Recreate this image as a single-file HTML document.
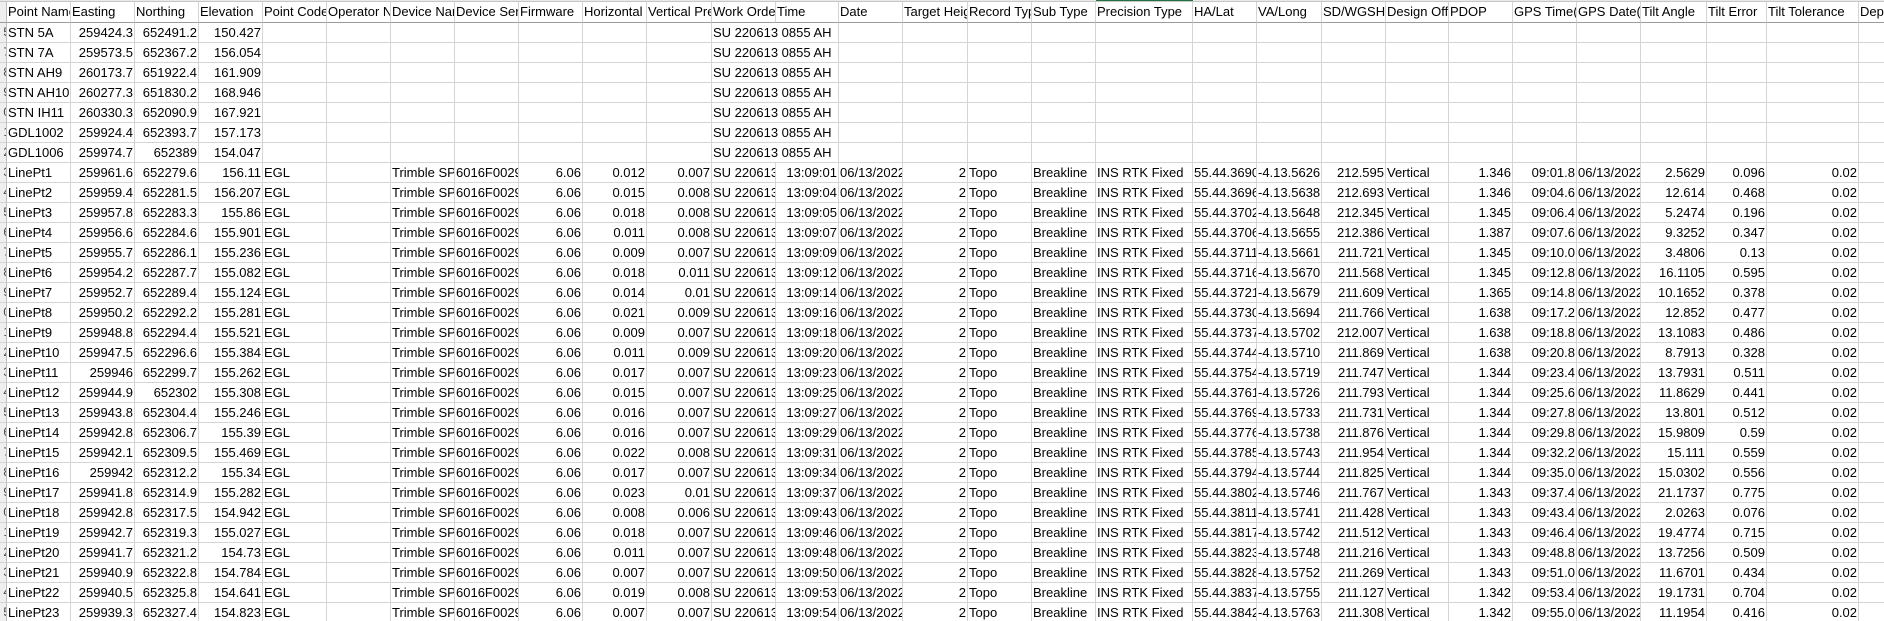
<!DOCTYPE html>
<html><head><meta charset="utf-8">
<style>
html,body{margin:0;padding:0;background:#fff;width:1884px;height:621px;overflow:hidden}
.strip{height:1px;background:#e9e9e9;border-bottom:1px solid #c6c6c6;position:relative}
.sel{position:absolute;left:1096px;top:-1px;width:97px;height:2px;background:#217346}
table{border-collapse:separate;border-spacing:0;table-layout:fixed;width:1919px;font-family:"Liberation Sans",Arial,sans-serif;font-size:13px;color:#000}
td{box-sizing:border-box;height:20px;border-right:1px solid #d4d4d4;border-bottom:1px solid #d4d4d4;padding:0 1px;white-space:nowrap;overflow:hidden;text-overflow:clip;line-height:19px}
tr.h td{height:21px;border-bottom:1px solid #9b9b9b;line-height:20px}
td.n{background:#efefef;border-right:1px solid #bdbdbd;padding:0;text-align:right;color:#444;font-size:12px}
td.n span{margin-right:-4px}
.r{text-align:right}
</style></head><body>
<div class="strip"><div class="sel"></div></div>
<table>
<colgroup>
<col style="width:7px"><col style="width:64px"><col style="width:64px"><col style="width:64px"><col style="width:64px"><col style="width:64px"><col style="width:64px"><col style="width:64px"><col style="width:64px"><col style="width:64px"><col style="width:64px"><col style="width:65px"><col style="width:64px"><col style="width:63px"><col style="width:64px"><col style="width:65px"><col style="width:64px"><col style="width:64px"><col style="width:97px"><col style="width:64px"><col style="width:65px"><col style="width:64px"><col style="width:63px"><col style="width:64px"><col style="width:64px"><col style="width:64px"><col style="width:66px"><col style="width:60px"><col style="width:92px"><col style="width:60px">
</colgroup>
<tr class="h"><td class="n"></td><td>Point Name</td><td>Easting</td><td>Northing</td><td>Elevation</td><td>Point Code</td><td>Operator Name</td><td>Device Name</td><td>Device Serial</td><td>Firmware</td><td>Horizontal Precision</td><td>Vertical Precision</td><td>Work Order</td><td>Time</td><td>Date</td><td>Target Height</td><td>Record Type</td><td>Sub Type</td><td>Precision Type</td><td>HA/Lat</td><td>VA/Long</td><td>SD/WGSHeight</td><td>Design Offset</td><td>PDOP</td><td>GPS Time(</td><td>GPS Date(</td><td>Tilt Angle</td><td>Tilt Error</td><td>Tilt Tolerance</td><td>Depth</td></tr>
<tr><td class="n"><span>5</span></td><td>STN 5A</td><td class="r">259424.3</td><td class="r">652491.2</td><td class="r">150.427</td><td></td><td></td><td></td><td></td><td></td><td></td><td></td><td colspan="2">SU 220613 0855 AH</td><td></td><td></td><td></td><td></td><td></td><td></td><td></td><td></td><td></td><td></td><td></td><td></td><td></td><td></td><td></td><td></td></tr>
<tr><td class="n"><span>7</span></td><td>STN 7A</td><td class="r">259573.5</td><td class="r">652367.2</td><td class="r">156.054</td><td></td><td></td><td></td><td></td><td></td><td></td><td></td><td colspan="2">SU 220613 0855 AH</td><td></td><td></td><td></td><td></td><td></td><td></td><td></td><td></td><td></td><td></td><td></td><td></td><td></td><td></td><td></td><td></td></tr>
<tr><td class="n"><span>8</span></td><td>STN AH9</td><td class="r">260173.7</td><td class="r">651922.4</td><td class="r">161.909</td><td></td><td></td><td></td><td></td><td></td><td></td><td></td><td colspan="2">SU 220613 0855 AH</td><td></td><td></td><td></td><td></td><td></td><td></td><td></td><td></td><td></td><td></td><td></td><td></td><td></td><td></td><td></td><td></td></tr>
<tr><td class="n"><span>9</span></td><td>STN AH10</td><td class="r">260277.3</td><td class="r">651830.2</td><td class="r">168.946</td><td></td><td></td><td></td><td></td><td></td><td></td><td></td><td colspan="2">SU 220613 0855 AH</td><td></td><td></td><td></td><td></td><td></td><td></td><td></td><td></td><td></td><td></td><td></td><td></td><td></td><td></td><td></td><td></td></tr>
<tr><td class="n"><span>0</span></td><td>STN IH11</td><td class="r">260330.3</td><td class="r">652090.9</td><td class="r">167.921</td><td></td><td></td><td></td><td></td><td></td><td></td><td></td><td colspan="2">SU 220613 0855 AH</td><td></td><td></td><td></td><td></td><td></td><td></td><td></td><td></td><td></td><td></td><td></td><td></td><td></td><td></td><td></td><td></td></tr>
<tr><td class="n"><span>1</span></td><td>GDL1002</td><td class="r">259924.4</td><td class="r">652393.7</td><td class="r">157.173</td><td></td><td></td><td></td><td></td><td></td><td></td><td></td><td colspan="2">SU 220613 0855 AH</td><td></td><td></td><td></td><td></td><td></td><td></td><td></td><td></td><td></td><td></td><td></td><td></td><td></td><td></td><td></td><td></td></tr>
<tr><td class="n"><span>2</span></td><td>GDL1006</td><td class="r">259974.7</td><td class="r">652389</td><td class="r">154.047</td><td></td><td></td><td></td><td></td><td></td><td></td><td></td><td colspan="2">SU 220613 0855 AH</td><td></td><td></td><td></td><td></td><td></td><td></td><td></td><td></td><td></td><td></td><td></td><td></td><td></td><td></td><td></td><td></td></tr>
<tr><td class="n"><span>3</span></td><td>LinePt1</td><td class="r">259961.6</td><td class="r">652279.6</td><td class="r">156.11</td><td>EGL</td><td></td><td>Trimble SPS</td><td>6016F00295</td><td class="r">6.06</td><td class="r">0.012</td><td class="r">0.007</td><td>SU 220613</td><td class="r">13:09:01</td><td>06/13/2022</td><td class="r">2</td><td>Topo</td><td>Breakline</td><td>INS RTK Fixed</td><td>55.44.3690</td><td>-4.13.5626</td><td class="r">212.595</td><td>Vertical</td><td class="r">1.346</td><td class="r">09:01.8</td><td>06/13/2022</td><td class="r">2.5629</td><td class="r">0.096</td><td class="r">0.02</td><td></td></tr>
<tr><td class="n"><span>4</span></td><td>LinePt2</td><td class="r">259959.4</td><td class="r">652281.5</td><td class="r">156.207</td><td>EGL</td><td></td><td>Trimble SPS</td><td>6016F00295</td><td class="r">6.06</td><td class="r">0.015</td><td class="r">0.008</td><td>SU 220613</td><td class="r">13:09:04</td><td>06/13/2022</td><td class="r">2</td><td>Topo</td><td>Breakline</td><td>INS RTK Fixed</td><td>55.44.3696</td><td>-4.13.5638</td><td class="r">212.693</td><td>Vertical</td><td class="r">1.346</td><td class="r">09:04.6</td><td>06/13/2022</td><td class="r">12.614</td><td class="r">0.468</td><td class="r">0.02</td><td></td></tr>
<tr><td class="n"><span>5</span></td><td>LinePt3</td><td class="r">259957.8</td><td class="r">652283.3</td><td class="r">155.86</td><td>EGL</td><td></td><td>Trimble SPS</td><td>6016F00295</td><td class="r">6.06</td><td class="r">0.018</td><td class="r">0.008</td><td>SU 220613</td><td class="r">13:09:05</td><td>06/13/2022</td><td class="r">2</td><td>Topo</td><td>Breakline</td><td>INS RTK Fixed</td><td>55.44.3702</td><td>-4.13.5648</td><td class="r">212.345</td><td>Vertical</td><td class="r">1.345</td><td class="r">09:06.4</td><td>06/13/2022</td><td class="r">5.2474</td><td class="r">0.196</td><td class="r">0.02</td><td></td></tr>
<tr><td class="n"><span>6</span></td><td>LinePt4</td><td class="r">259956.6</td><td class="r">652284.6</td><td class="r">155.901</td><td>EGL</td><td></td><td>Trimble SPS</td><td>6016F00295</td><td class="r">6.06</td><td class="r">0.011</td><td class="r">0.008</td><td>SU 220613</td><td class="r">13:09:07</td><td>06/13/2022</td><td class="r">2</td><td>Topo</td><td>Breakline</td><td>INS RTK Fixed</td><td>55.44.3706</td><td>-4.13.5655</td><td class="r">212.386</td><td>Vertical</td><td class="r">1.387</td><td class="r">09:07.6</td><td>06/13/2022</td><td class="r">9.3252</td><td class="r">0.347</td><td class="r">0.02</td><td></td></tr>
<tr><td class="n"><span>7</span></td><td>LinePt5</td><td class="r">259955.7</td><td class="r">652286.1</td><td class="r">155.236</td><td>EGL</td><td></td><td>Trimble SPS</td><td>6016F00295</td><td class="r">6.06</td><td class="r">0.009</td><td class="r">0.007</td><td>SU 220613</td><td class="r">13:09:09</td><td>06/13/2022</td><td class="r">2</td><td>Topo</td><td>Breakline</td><td>INS RTK Fixed</td><td>55.44.3711</td><td>-4.13.5661</td><td class="r">211.721</td><td>Vertical</td><td class="r">1.345</td><td class="r">09:10.0</td><td>06/13/2022</td><td class="r">3.4806</td><td class="r">0.13</td><td class="r">0.02</td><td></td></tr>
<tr><td class="n"><span>8</span></td><td>LinePt6</td><td class="r">259954.2</td><td class="r">652287.7</td><td class="r">155.082</td><td>EGL</td><td></td><td>Trimble SPS</td><td>6016F00295</td><td class="r">6.06</td><td class="r">0.018</td><td class="r">0.011</td><td>SU 220613</td><td class="r">13:09:12</td><td>06/13/2022</td><td class="r">2</td><td>Topo</td><td>Breakline</td><td>INS RTK Fixed</td><td>55.44.3716</td><td>-4.13.5670</td><td class="r">211.568</td><td>Vertical</td><td class="r">1.345</td><td class="r">09:12.8</td><td>06/13/2022</td><td class="r">16.1105</td><td class="r">0.595</td><td class="r">0.02</td><td></td></tr>
<tr><td class="n"><span>9</span></td><td>LinePt7</td><td class="r">259952.7</td><td class="r">652289.4</td><td class="r">155.124</td><td>EGL</td><td></td><td>Trimble SPS</td><td>6016F00295</td><td class="r">6.06</td><td class="r">0.014</td><td class="r">0.01</td><td>SU 220613</td><td class="r">13:09:14</td><td>06/13/2022</td><td class="r">2</td><td>Topo</td><td>Breakline</td><td>INS RTK Fixed</td><td>55.44.3721</td><td>-4.13.5679</td><td class="r">211.609</td><td>Vertical</td><td class="r">1.365</td><td class="r">09:14.8</td><td>06/13/2022</td><td class="r">10.1652</td><td class="r">0.378</td><td class="r">0.02</td><td></td></tr>
<tr><td class="n"><span>0</span></td><td>LinePt8</td><td class="r">259950.2</td><td class="r">652292.2</td><td class="r">155.281</td><td>EGL</td><td></td><td>Trimble SPS</td><td>6016F00295</td><td class="r">6.06</td><td class="r">0.021</td><td class="r">0.009</td><td>SU 220613</td><td class="r">13:09:16</td><td>06/13/2022</td><td class="r">2</td><td>Topo</td><td>Breakline</td><td>INS RTK Fixed</td><td>55.44.3730</td><td>-4.13.5694</td><td class="r">211.766</td><td>Vertical</td><td class="r">1.638</td><td class="r">09:17.2</td><td>06/13/2022</td><td class="r">12.852</td><td class="r">0.477</td><td class="r">0.02</td><td></td></tr>
<tr><td class="n"><span>1</span></td><td>LinePt9</td><td class="r">259948.8</td><td class="r">652294.4</td><td class="r">155.521</td><td>EGL</td><td></td><td>Trimble SPS</td><td>6016F00295</td><td class="r">6.06</td><td class="r">0.009</td><td class="r">0.007</td><td>SU 220613</td><td class="r">13:09:18</td><td>06/13/2022</td><td class="r">2</td><td>Topo</td><td>Breakline</td><td>INS RTK Fixed</td><td>55.44.3737</td><td>-4.13.5702</td><td class="r">212.007</td><td>Vertical</td><td class="r">1.638</td><td class="r">09:18.8</td><td>06/13/2022</td><td class="r">13.1083</td><td class="r">0.486</td><td class="r">0.02</td><td></td></tr>
<tr><td class="n"><span>2</span></td><td>LinePt10</td><td class="r">259947.5</td><td class="r">652296.6</td><td class="r">155.384</td><td>EGL</td><td></td><td>Trimble SPS</td><td>6016F00295</td><td class="r">6.06</td><td class="r">0.011</td><td class="r">0.009</td><td>SU 220613</td><td class="r">13:09:20</td><td>06/13/2022</td><td class="r">2</td><td>Topo</td><td>Breakline</td><td>INS RTK Fixed</td><td>55.44.3744</td><td>-4.13.5710</td><td class="r">211.869</td><td>Vertical</td><td class="r">1.638</td><td class="r">09:20.8</td><td>06/13/2022</td><td class="r">8.7913</td><td class="r">0.328</td><td class="r">0.02</td><td></td></tr>
<tr><td class="n"><span>3</span></td><td>LinePt11</td><td class="r">259946</td><td class="r">652299.7</td><td class="r">155.262</td><td>EGL</td><td></td><td>Trimble SPS</td><td>6016F00295</td><td class="r">6.06</td><td class="r">0.017</td><td class="r">0.007</td><td>SU 220613</td><td class="r">13:09:23</td><td>06/13/2022</td><td class="r">2</td><td>Topo</td><td>Breakline</td><td>INS RTK Fixed</td><td>55.44.3754</td><td>-4.13.5719</td><td class="r">211.747</td><td>Vertical</td><td class="r">1.344</td><td class="r">09:23.4</td><td>06/13/2022</td><td class="r">13.7931</td><td class="r">0.511</td><td class="r">0.02</td><td></td></tr>
<tr><td class="n"><span>4</span></td><td>LinePt12</td><td class="r">259944.9</td><td class="r">652302</td><td class="r">155.308</td><td>EGL</td><td></td><td>Trimble SPS</td><td>6016F00295</td><td class="r">6.06</td><td class="r">0.015</td><td class="r">0.007</td><td>SU 220613</td><td class="r">13:09:25</td><td>06/13/2022</td><td class="r">2</td><td>Topo</td><td>Breakline</td><td>INS RTK Fixed</td><td>55.44.3761</td><td>-4.13.5726</td><td class="r">211.793</td><td>Vertical</td><td class="r">1.344</td><td class="r">09:25.6</td><td>06/13/2022</td><td class="r">11.8629</td><td class="r">0.441</td><td class="r">0.02</td><td></td></tr>
<tr><td class="n"><span>5</span></td><td>LinePt13</td><td class="r">259943.8</td><td class="r">652304.4</td><td class="r">155.246</td><td>EGL</td><td></td><td>Trimble SPS</td><td>6016F00295</td><td class="r">6.06</td><td class="r">0.016</td><td class="r">0.007</td><td>SU 220613</td><td class="r">13:09:27</td><td>06/13/2022</td><td class="r">2</td><td>Topo</td><td>Breakline</td><td>INS RTK Fixed</td><td>55.44.3769</td><td>-4.13.5733</td><td class="r">211.731</td><td>Vertical</td><td class="r">1.344</td><td class="r">09:27.8</td><td>06/13/2022</td><td class="r">13.801</td><td class="r">0.512</td><td class="r">0.02</td><td></td></tr>
<tr><td class="n"><span>6</span></td><td>LinePt14</td><td class="r">259942.8</td><td class="r">652306.7</td><td class="r">155.39</td><td>EGL</td><td></td><td>Trimble SPS</td><td>6016F00295</td><td class="r">6.06</td><td class="r">0.016</td><td class="r">0.007</td><td>SU 220613</td><td class="r">13:09:29</td><td>06/13/2022</td><td class="r">2</td><td>Topo</td><td>Breakline</td><td>INS RTK Fixed</td><td>55.44.3776</td><td>-4.13.5738</td><td class="r">211.876</td><td>Vertical</td><td class="r">1.344</td><td class="r">09:29.8</td><td>06/13/2022</td><td class="r">15.9809</td><td class="r">0.59</td><td class="r">0.02</td><td></td></tr>
<tr><td class="n"><span>7</span></td><td>LinePt15</td><td class="r">259942.1</td><td class="r">652309.5</td><td class="r">155.469</td><td>EGL</td><td></td><td>Trimble SPS</td><td>6016F00295</td><td class="r">6.06</td><td class="r">0.022</td><td class="r">0.008</td><td>SU 220613</td><td class="r">13:09:31</td><td>06/13/2022</td><td class="r">2</td><td>Topo</td><td>Breakline</td><td>INS RTK Fixed</td><td>55.44.3785</td><td>-4.13.5743</td><td class="r">211.954</td><td>Vertical</td><td class="r">1.344</td><td class="r">09:32.2</td><td>06/13/2022</td><td class="r">15.111</td><td class="r">0.559</td><td class="r">0.02</td><td></td></tr>
<tr><td class="n"><span>8</span></td><td>LinePt16</td><td class="r">259942</td><td class="r">652312.2</td><td class="r">155.34</td><td>EGL</td><td></td><td>Trimble SPS</td><td>6016F00295</td><td class="r">6.06</td><td class="r">0.017</td><td class="r">0.007</td><td>SU 220613</td><td class="r">13:09:34</td><td>06/13/2022</td><td class="r">2</td><td>Topo</td><td>Breakline</td><td>INS RTK Fixed</td><td>55.44.3794</td><td>-4.13.5744</td><td class="r">211.825</td><td>Vertical</td><td class="r">1.344</td><td class="r">09:35.0</td><td>06/13/2022</td><td class="r">15.0302</td><td class="r">0.556</td><td class="r">0.02</td><td></td></tr>
<tr><td class="n"><span>9</span></td><td>LinePt17</td><td class="r">259941.8</td><td class="r">652314.9</td><td class="r">155.282</td><td>EGL</td><td></td><td>Trimble SPS</td><td>6016F00295</td><td class="r">6.06</td><td class="r">0.023</td><td class="r">0.01</td><td>SU 220613</td><td class="r">13:09:37</td><td>06/13/2022</td><td class="r">2</td><td>Topo</td><td>Breakline</td><td>INS RTK Fixed</td><td>55.44.3802</td><td>-4.13.5746</td><td class="r">211.767</td><td>Vertical</td><td class="r">1.343</td><td class="r">09:37.4</td><td>06/13/2022</td><td class="r">21.1737</td><td class="r">0.775</td><td class="r">0.02</td><td></td></tr>
<tr><td class="n"><span>0</span></td><td>LinePt18</td><td class="r">259942.8</td><td class="r">652317.5</td><td class="r">154.942</td><td>EGL</td><td></td><td>Trimble SPS</td><td>6016F00295</td><td class="r">6.06</td><td class="r">0.008</td><td class="r">0.006</td><td>SU 220613</td><td class="r">13:09:43</td><td>06/13/2022</td><td class="r">2</td><td>Topo</td><td>Breakline</td><td>INS RTK Fixed</td><td>55.44.3811</td><td>-4.13.5741</td><td class="r">211.428</td><td>Vertical</td><td class="r">1.343</td><td class="r">09:43.4</td><td>06/13/2022</td><td class="r">2.0263</td><td class="r">0.076</td><td class="r">0.02</td><td></td></tr>
<tr><td class="n"><span>1</span></td><td>LinePt19</td><td class="r">259942.7</td><td class="r">652319.3</td><td class="r">155.027</td><td>EGL</td><td></td><td>Trimble SPS</td><td>6016F00295</td><td class="r">6.06</td><td class="r">0.018</td><td class="r">0.007</td><td>SU 220613</td><td class="r">13:09:46</td><td>06/13/2022</td><td class="r">2</td><td>Topo</td><td>Breakline</td><td>INS RTK Fixed</td><td>55.44.3817</td><td>-4.13.5742</td><td class="r">211.512</td><td>Vertical</td><td class="r">1.343</td><td class="r">09:46.4</td><td>06/13/2022</td><td class="r">19.4774</td><td class="r">0.715</td><td class="r">0.02</td><td></td></tr>
<tr><td class="n"><span>2</span></td><td>LinePt20</td><td class="r">259941.7</td><td class="r">652321.2</td><td class="r">154.73</td><td>EGL</td><td></td><td>Trimble SPS</td><td>6016F00295</td><td class="r">6.06</td><td class="r">0.011</td><td class="r">0.007</td><td>SU 220613</td><td class="r">13:09:48</td><td>06/13/2022</td><td class="r">2</td><td>Topo</td><td>Breakline</td><td>INS RTK Fixed</td><td>55.44.3823</td><td>-4.13.5748</td><td class="r">211.216</td><td>Vertical</td><td class="r">1.343</td><td class="r">09:48.8</td><td>06/13/2022</td><td class="r">13.7256</td><td class="r">0.509</td><td class="r">0.02</td><td></td></tr>
<tr><td class="n"><span>3</span></td><td>LinePt21</td><td class="r">259940.9</td><td class="r">652322.8</td><td class="r">154.784</td><td>EGL</td><td></td><td>Trimble SPS</td><td>6016F00295</td><td class="r">6.06</td><td class="r">0.007</td><td class="r">0.007</td><td>SU 220613</td><td class="r">13:09:50</td><td>06/13/2022</td><td class="r">2</td><td>Topo</td><td>Breakline</td><td>INS RTK Fixed</td><td>55.44.3828</td><td>-4.13.5752</td><td class="r">211.269</td><td>Vertical</td><td class="r">1.343</td><td class="r">09:51.0</td><td>06/13/2022</td><td class="r">11.6701</td><td class="r">0.434</td><td class="r">0.02</td><td></td></tr>
<tr><td class="n"><span>4</span></td><td>LinePt22</td><td class="r">259940.5</td><td class="r">652325.8</td><td class="r">154.641</td><td>EGL</td><td></td><td>Trimble SPS</td><td>6016F00295</td><td class="r">6.06</td><td class="r">0.019</td><td class="r">0.008</td><td>SU 220613</td><td class="r">13:09:53</td><td>06/13/2022</td><td class="r">2</td><td>Topo</td><td>Breakline</td><td>INS RTK Fixed</td><td>55.44.3837</td><td>-4.13.5755</td><td class="r">211.127</td><td>Vertical</td><td class="r">1.342</td><td class="r">09:53.4</td><td>06/13/2022</td><td class="r">19.1731</td><td class="r">0.704</td><td class="r">0.02</td><td></td></tr>
<tr><td class="n"><span>5</span></td><td>LinePt23</td><td class="r">259939.3</td><td class="r">652327.4</td><td class="r">154.823</td><td>EGL</td><td></td><td>Trimble SPS</td><td>6016F00295</td><td class="r">6.06</td><td class="r">0.007</td><td class="r">0.007</td><td>SU 220613</td><td class="r">13:09:54</td><td>06/13/2022</td><td class="r">2</td><td>Topo</td><td>Breakline</td><td>INS RTK Fixed</td><td>55.44.3842</td><td>-4.13.5763</td><td class="r">211.308</td><td>Vertical</td><td class="r">1.342</td><td class="r">09:55.0</td><td>06/13/2022</td><td class="r">11.1954</td><td class="r">0.416</td><td class="r">0.02</td><td></td></tr>
</table>
</body></html>
